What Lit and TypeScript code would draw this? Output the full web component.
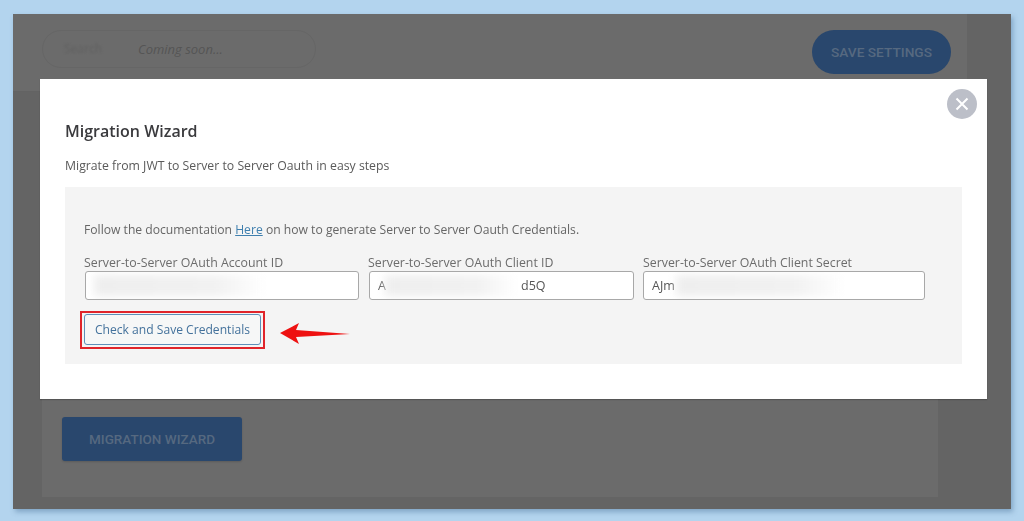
import { LitElement, html, css } from "lit";
import { customElement } from "lit/decorators.js";

@customElement("app-root")
export class AppRoot extends LitElement {
  static styles = css`
    :host { display: block; width: 1024px; height: 521px; overflow: hidden; background: #b3d4ee; font-family: "Open Sans", "Noto Sans", sans-serif; }
    * { box-sizing: border-box; }
    .outer { padding: 14px 13px 12px 13px; height: 521px; }
    .screen { position: relative; height: 495px; background: #646464; box-shadow: 2px 3px 5px rgba(70,110,150,.45); overflow: hidden; filter: blur(.35px); }
    .topbar { height: 78px; margin-right: 44px; background: #6b6b6b; border-bottom: 1px solid #636363; display: flex; align-items: center; justify-content: space-between; padding: 0 16px 2px 29px; }
    .pill { width: 274px; height: 38px; margin-bottom: 6px; border: 1px solid #666; border-radius: 19px; display: flex; align-items: center; padding: 0 0 0 21px; gap: 36px; font-size: 13px; color: #555; font-style: italic; }
    .pill .faint { font-size: 12px; color: #616161; font-style: normal; filter: blur(.8px); }
    .save { width: 139px; height: 44px; border-radius: 22px; background: #29476d; color: #566980; font: 500 13.7px Roboto, sans-serif; display: flex; align-items: center; justify-content: center; }
    .card { margin: 0 73px 12px 29px; height: 405px; background: #6b6b6b; display: flex; align-items: flex-end; padding: 0 0 36px 20px; }
    .wizard { width: 180px; height: 44px; border-radius: 3px; background: #29476d; color: #566980; font: 500 13.5px Roboto, sans-serif; display: flex; align-items: center; justify-content: center; box-shadow: 0 1px 2px rgba(0,0,0,.15); }
    .modal { position: absolute; left: 27px; top: 65px; width: 947px; height: 320px; background: #fff; padding: 42px 25px 0; color: #444; box-shadow: 0 1px 1px rgba(0,0,0,.2); }
    .close { position: absolute; right: 10px; top: 10px; width: 30px; height: 30px; border-radius: 50%; background: #bcbfc8; display: flex; align-items: center; justify-content: center; }
    h2 { margin: 0; font-size: 16px; line-height: 20px; font-weight: 600; color: #3a3a3d; }
    .sub { margin: 16px 0 0; font-size: 12.27px; line-height: 18px; color: #5a5a5a; }
    .panel { margin-top: 12px; height: 177px; background: #f4f4f4; padding: 34px 19px 0; font-size: 12.15px; color: #666; }
    .panel p { margin: 0; line-height: 18px; }
    a { color: #3f7fae; text-decoration: underline; }
    .fields { display: flex; margin-top: 16px; }
    .field { display: flex; flex-direction: column; }
    .field label { font-size: 12.35px; line-height: 16px; height: 16px; white-space: nowrap; color: #6c6c6c; }
    .f1 { width: 284px; } .f2 { width: 275px; } .f3 { width: 282px; }
    .f1 .input { margin-left: 1px; width: 274px; } .f2 .input { margin-left: 1px; width: 265px; } .f3 .input { width: 282px; }
    .input { position: relative; height: 29px; background: #fff; border: 1px solid #a8a8a8; border-radius: 3px; font-size: 12.5px; line-height: 27px; padding-left: 8px; color: #555; overflow: hidden; }
    .smear { position: absolute; top: 3px; height: 21px; filter: blur(4px); background: linear-gradient(90deg, #eeeeee, #f1f1f1 70%, #ffffff); }
    .s1 { left: 8px; width: 172px; } .s2 { left: 15px; width: 132px; } .s3 { left: 32px; width: 168px; }
    .right { position: absolute; left: 151px; }
    .redbox { margin: 11px 0 0 -4px; width: 185px; height: 38px; border: 2px solid #e0242a; padding: 1px 2px 2px 2px; display: flex; }
    .btn { width: 100%; border: 1px solid #5e8fb8; border-radius: 3px; background: #f6f7f7; color: #44729c; display: flex; align-items: center; justify-content: center; font-size: 12.1px; }
    .row { display: flex; align-items: center; }
    .arrow { margin: 18px 0 0 14px; }
  `;

  render() {
    return html`<div class="outer"><div class="screen">
      <div class="topbar">
        <div class="pill"><span class="faint">Search</span><span>Coming soon...</span></div>
        <div class="save">SAVE SETTINGS</div>
      </div>
      <div class="card"><div class="wizard">MIGRATION WIZARD</div></div>
      <div class="modal">
        <div class="close"><svg width="16" height="16" viewBox="0 0 16 16"><path d="M2.5 2.5 13.5 13.5M13.5 2.5 2.5 13.5" stroke="#fff" stroke-width="2" fill="none"/></svg></div>
        <h2>Migration Wizard</h2>
        <p class="sub">Migrate from JWT to Server to Server Oauth in easy steps</p>
        <div class="panel">
          <p>Follow the documentation <a>Here</a> on how to generate Server to Server Oauth Credentials.</p>
          <div class="fields">
            <div class="field f1"><label>Server-to-Server OAuth Account ID</label><div class="input"><span class="smear s1"></span></div></div>
            <div class="field f2"><label>Server-to-Server OAuth Client ID</label><div class="input">A<span class="smear s2"></span><span class="right">d5Q</span></div></div>
            <div class="field f3"><label>Server-to-Server OAuth Client Secret</label><div class="input">AJm<span class="smear s3"></span></div></div>
          </div>
          <div class="row">
            <div class="redbox"><div class="btn">Check and Save Credentials</div></div>
            <svg class="arrow" width="72" height="24" viewBox="0 0 72 24"><polygon points="1,11 20,1 17,8 71,12 17,15 20,22" fill="#ee1111"/></svg>
          </div>
        </div>
      </div>
    </div></div>`;
  }
}
